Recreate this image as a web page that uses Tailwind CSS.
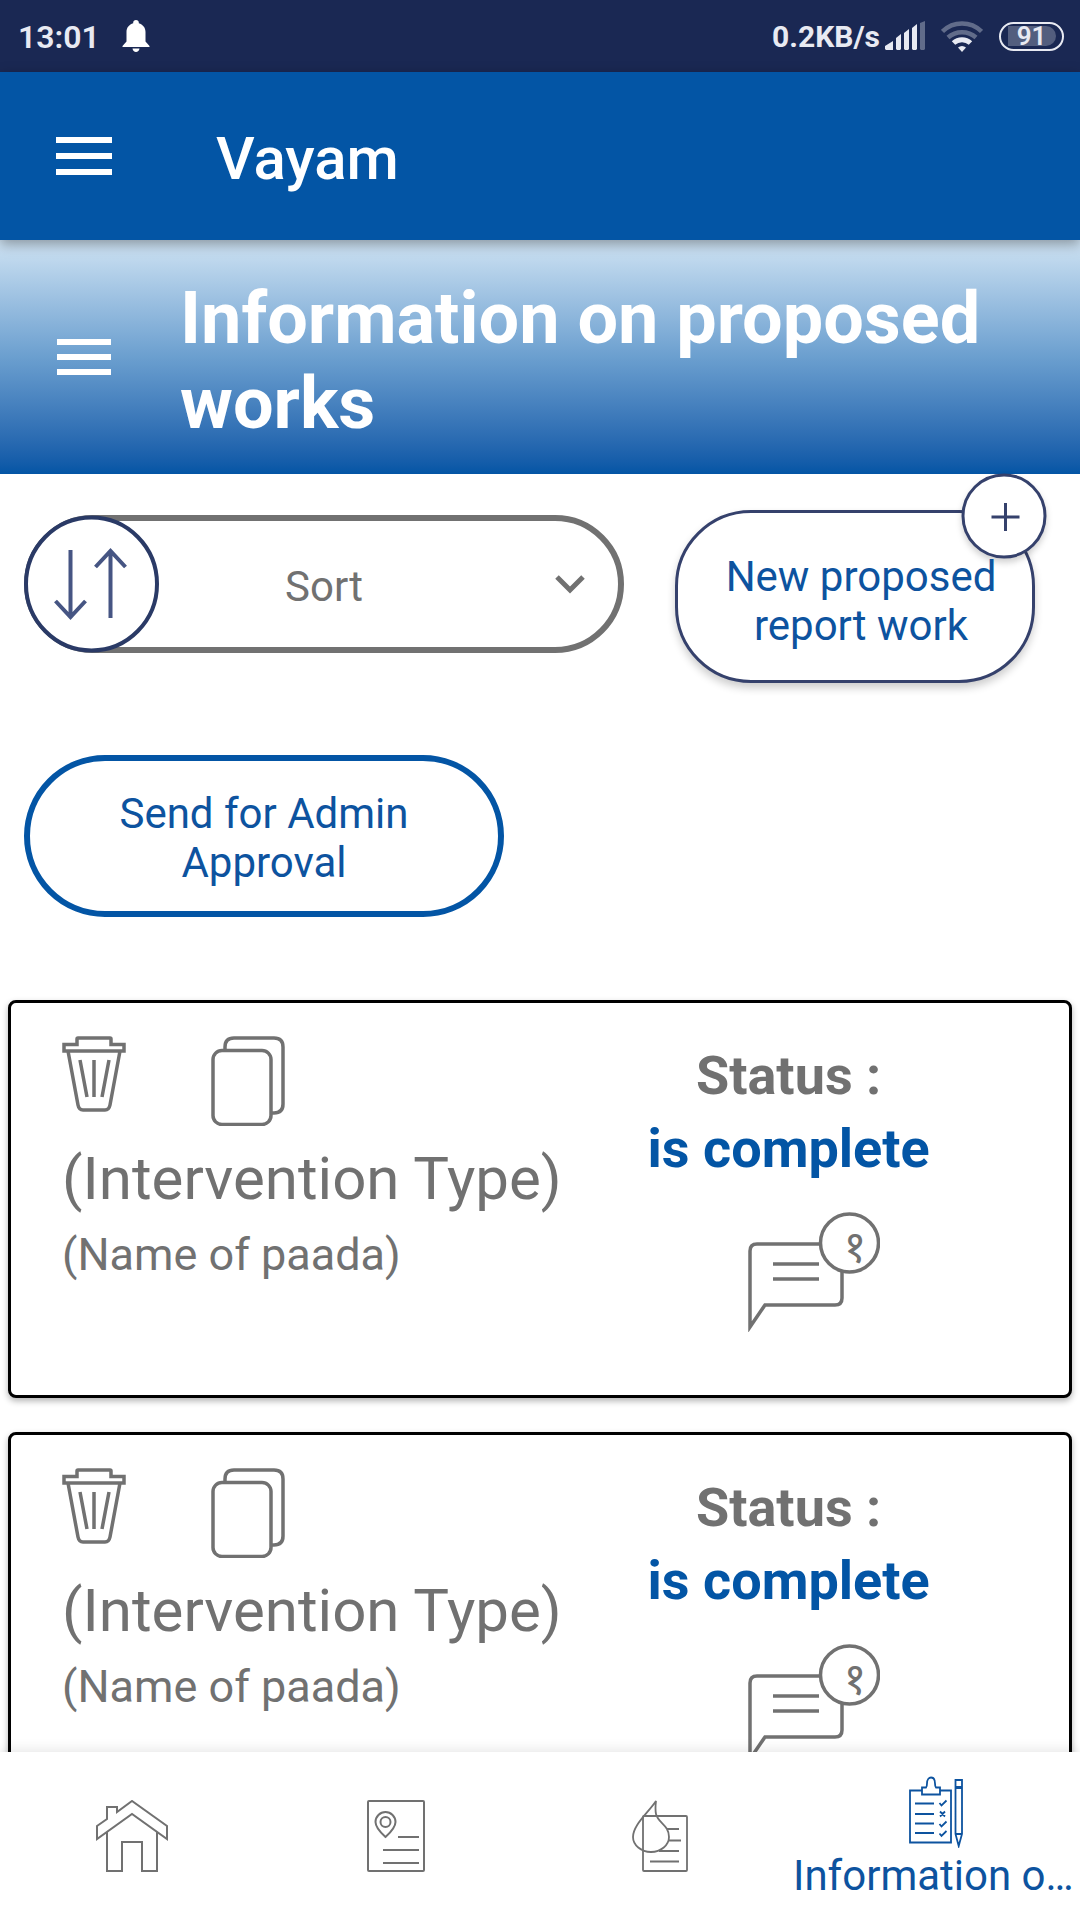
<!DOCTYPE html>
<html lang="en">
<head>
<meta charset="utf-8">
<meta name="viewport" content="width=device-width, initial-scale=1">
<title>Vayam</title>
<script src="https://cdn.jsdelivr.net/npm/@tailwindcss/browser@4"></script>
</head>
<body class="flex h-screen flex-col overflow-hidden bg-white font-['Roboto','Noto_Sans',sans-serif] text-[#717171]">

<!-- Device status bar -->
<div class="flex h-[72px] shrink-0 items-center justify-between bg-[#1a2853] pr-4 pl-[18px] text-[#e8eaf2]">
  <div class="flex items-center gap-[22px]">
    <span class="pt-px text-[32px] leading-9 font-semibold">13:01</span>
    <svg class="h-8 w-7 text-white" viewBox="0 0 28 32" fill="currentColor" aria-label="Notifications"><path d="M14 0c1.700 0 2.800 1.200 2.800 2.600v.6c4 1.200 6.700 4.300 6.700 8.800v9.500L27.500 26v1H.5v-1l4-4.500V12c0-4.500 2.700-7.600 6.700-8.800v-.6C11.200 1.200 12.300 0 14 0zM10.500 28.500h7c-.3 2-1.700 3.500-3.500 3.500s-3.200-1.500-3.500-3.500z"/></svg>
  </div>
  <div class="flex items-center">
    <span class="pt-px text-[30px] leading-9 font-bold">0.2KB/s</span>
    <svg class="ml-[5px] h-8 w-10" viewBox="0 0 40 32" fill="currentColor" aria-label="Signal"><path d="M0 29v-3l8-5v9H1zM11 18l5-4v15l-1 1h-3l-1-1zM19 13l5-4v20l-1 1h-3l-1-1zM27 8l5-4v25l-1 1h-3l-1-1z"/><path opacity=".35" d="M35 3l5-2v28l-1 1h-3l-1-1z"/></svg>
    <svg class="ml-4 h-8 w-[42px]" viewBox="0 0 42 32" fill="none" stroke="currentColor" stroke-width="4.500" aria-label="Wi-Fi"><path opacity=".35" d="M1.500 11.500a28 28 0 0 1 39 0M7 17.500a21 21 0 0 1 28 0"/><path d="M12.500 23a12.500 12.500 0 0 1 17 0" stroke-width="5"/><path fill="currentColor" stroke="none" d="M21 32l-4-4.500a6 6 0 0 1 8 0z"/></svg>
    <div class="ml-4 flex h-[29px] w-[65px] items-center justify-center rounded-full border-2 border-[#e8eaf2]">
      <span class="flex h-5 w-12 items-center justify-center rounded-r-full rounded-l-md bg-white/25 text-[26px] leading-5 font-semibold">91</span>
    </div>
  </div>
</div>

<!-- App bar -->
<header class="relative z-10 flex h-[168px] shrink-0 items-center bg-[#0355a5] pl-14 text-white shadow-[0_4px_12px_rgba(0,0,0,0.35)]">
  <button class="flex w-14 flex-col gap-[10px]" aria-label="Open menu">
    <span class="h-[6px] w-full bg-white"></span><span class="h-[6px] w-full bg-white"></span><span class="h-[6px] w-full bg-white"></span>
  </button>
  <span class="pt-[6px] pl-[104px] text-[60px] leading-[72px] font-medium">Vayam</span>
</header>

<!-- Page banner -->
<section class="flex shrink-0 items-center bg-linear-to-b from-[#cfe3f3] via-[#6b9fcf] to-[#0355a5] pl-[57px] text-white">
  <button class="flex w-[54px] shrink-0 flex-col gap-[9px]" aria-label="Open section menu">
    <span class="h-[6px] w-full bg-white"></span><span class="h-[6px] w-full bg-white"></span><span class="h-[6px] w-full bg-white"></span>
  </button>
  <h1 class="flex-1 pt-9 pr-8 pb-7 pl-[69px] text-[72px] leading-[85px] font-bold">Information on proposed works</h1>
</section>

<main class="min-h-0 flex-1 overflow-visible">
  <div class="grid grid-cols-[5fr_3fr] items-start gap-[51px] pt-9 pr-[45px] pl-6">
    <label class="relative mt-[5px] flex h-[138px] min-w-0 items-center rounded-full border-6 border-[#717171]">
      <svg class="-ml-[6px] h-[138px] w-[136px] shrink-0" viewBox="0 0 136 138" fill="none" stroke="#2a3a66" aria-hidden="true"><ellipse cx="67.500" cy="69" rx="65.500" ry="66.500" fill="#fff" stroke-width="4"/><path stroke="#465583" stroke-width="4" d="M46.500 35v67M31.500 86l15 16 15-16M86.500 103V36M71.500 52l15-16 15 16"/></svg>
      <select aria-label="Sort" class="h-full min-w-0 flex-1 appearance-none rounded-r-full bg-transparent pt-1 pl-[125px] text-[42px] text-[#717171]">
        <option>Sort</option>
      </select>
      <svg class="pointer-events-none absolute right-[33px] h-5 w-[30px]" viewBox="0 0 30 20" fill="none" stroke="currentColor" stroke-width="5" aria-hidden="true"><path d="M2 3l13 13L28 3"/></svg>
    </label>
    <button class="relative min-w-0 rounded-[76px] border-3 border-[#35416c] bg-white pt-[39px] pr-8 pb-[30px] pl-11 text-[42px] leading-[49px] text-[#0d539f] shadow-[0_5px_8px_rgba(0,0,0,0.2)]">
      <svg class="absolute -top-[41px] -right-[16px] h-[88px] w-[88px] overflow-visible drop-shadow-[0_4px_3px_rgba(0,0,0,0.18)]" viewBox="0 0 88 88" fill="none" stroke="#35416c" stroke-width="3" aria-hidden="true"><circle cx="44" cy="44" r="41" fill="#fff"/><path d="M31.500 45h28M45.500 31v28"/></svg>
      <span class="relative">New proposed report work</span>
    </button>
  </div>

  <div class="px-6 pt-[72px] pb-[83px]">
    <button class="w-[480px] max-w-full rounded-full border-6 border-[#0355a5] px-20 pt-7 pb-6 text-[42px] leading-[49px] text-[#0d539f]">Send for Admin Approval</button>
  </div>

  <div class="flex flex-col gap-[34px] px-2">
    <article class="flex min-h-[398px] rounded-lg border-3 border-black bg-white pt-[33px] shadow-[0_3px_6px_rgba(0,0,0,0.3)]">
      <div class="w-[54%] pl-[51px]">
        <div class="flex gap-[85px]">
          <button class="h-[90px] w-16" aria-label="Delete"><svg class="h-[90px] w-16" viewBox="0 0 64 90" fill="none" stroke="currentColor" stroke-width="3.500"><path d="M2 15V8.500h13V3q0-1 1-1h32q1 0 1 1v5.500h13V15zM6 15l10 54q1 5 5 5h22q4 0 5-5l10-54M18 24l7 37M32 24v37M47 24l-7 37"/></svg></button>
          <button class="h-[90px] w-[74px]" aria-label="Duplicate"><svg class="h-[90px] w-[74px]" viewBox="0 0 74 90" fill="none" stroke="currentColor" stroke-width="3.500"><rect x="2" y="14.500" width="58" height="74" rx="9"/><path d="M14 14v-3q0-9 9-9h40q9 0 9 9v57q0 9-9 9h-3"/></svg></button>
        </div>
        <h2 class="pt-[17px] text-[60px] leading-[72px]">(Intervention Type)</h2>
        <p class="pt-[14px] text-[45px] leading-[52px]">(Name of paada)</p>
      </div>
      <div class="flex w-[39%] flex-col items-center pt-[3px] text-[54px] leading-[73px] font-bold">
        <p>Status :</p>
        <p class="text-[#0355a5]">is complete</p>
        <button class="mt-[27px] ml-[50px] h-[120px] w-[132px]" aria-label="Comments"><svg class="h-[120px] w-[132px]" viewBox="0 0 132 120" fill="none" stroke="currentColor" stroke-width="3.500"><path d="M71 32H9q-7 0-7 7v76l15-22h70q7 0 7-7V60M25 52h46M25 67h46"/><circle cx="101.500" cy="31" r="29"/><text x="107" y="50" text-anchor="middle" font-size="44" font-weight="400" fill="currentColor" stroke="none">१</text></svg></button>
      </div>
    </article>

    <article class="flex min-h-[398px] rounded-lg border-3 border-black bg-white pt-[33px] shadow-[0_3px_6px_rgba(0,0,0,0.3)]">
      <div class="w-[54%] pl-[51px]">
        <div class="flex gap-[85px]">
          <button class="h-[90px] w-16" aria-label="Delete"><svg class="h-[90px] w-16" viewBox="0 0 64 90" fill="none" stroke="currentColor" stroke-width="3.500"><path d="M2 15V8.500h13V3q0-1 1-1h32q1 0 1 1v5.500h13V15zM6 15l10 54q1 5 5 5h22q4 0 5-5l10-54M18 24l7 37M32 24v37M47 24l-7 37"/></svg></button>
          <button class="h-[90px] w-[74px]" aria-label="Duplicate"><svg class="h-[90px] w-[74px]" viewBox="0 0 74 90" fill="none" stroke="currentColor" stroke-width="3.500"><rect x="2" y="14.500" width="58" height="74" rx="9"/><path d="M14 14v-3q0-9 9-9h40q9 0 9 9v57q0 9-9 9h-3"/></svg></button>
        </div>
        <h2 class="pt-[17px] text-[60px] leading-[72px]">(Intervention Type)</h2>
        <p class="pt-[14px] text-[45px] leading-[52px]">(Name of paada)</p>
      </div>
      <div class="flex w-[39%] flex-col items-center pt-[3px] text-[54px] leading-[73px] font-bold">
        <p>Status :</p>
        <p class="text-[#0355a5]">is complete</p>
        <button class="mt-[27px] ml-[50px] h-[120px] w-[132px]" aria-label="Comments"><svg class="h-[120px] w-[132px]" viewBox="0 0 132 120" fill="none" stroke="currentColor" stroke-width="3.500"><path d="M71 32H9q-7 0-7 7v76l15-22h70q7 0 7-7V60M25 52h46M25 67h46"/><circle cx="101.500" cy="31" r="29"/><text x="107" y="50" text-anchor="middle" font-size="44" font-weight="400" fill="currentColor" stroke="none">१</text></svg></button>
      </div>
    </article>
  </div>
</main>

<!-- Bottom tabs -->
<nav class="relative z-10 flex h-[168px] shrink-0 bg-white shadow-[0_-2px_12px_rgba(0,0,0,0.1)]">
  <a href="#" class="flex min-w-0 flex-11 items-center justify-center" aria-label="Home">
    <svg class="size-[72px]" viewBox="0 0 72 72" fill="none" stroke="currentColor" stroke-width="2"><path d="M1 26l10-7V7h10v5l15-11 35 25v13L36 14 1 39zM11 32v39h15V42h20v29h15V32"/></svg>
  </a>
  <a href="#" class="flex min-w-0 flex-11 items-center justify-center" aria-label="Locations">
    <svg class="h-[72px] w-[58px]" viewBox="0 0 58 72" fill="none" stroke="currentColor" stroke-width="2"><rect x="1" y="1" width="56" height="70" rx="1"/><path d="M18.500 37Q8.500 28 8.500 22a10 10 0 0 1 20 0q0 6-10 15zM31 37h21M16 50h36M16 63h36"/><circle cx="18.500" cy="22" r="5"/></svg>
  </a>
  <a href="#" class="flex min-w-0 flex-11 items-center justify-center" aria-label="Water report">
    <svg class="h-[72px] w-14" viewBox="0 0 56 72" fill="none" stroke="currentColor" stroke-width="1.800"><rect x="11" y="16" width="44" height="55" rx="1"/><path d="M24 1C16 13 1 25 1 37c0 8 8 15 18 15s18-7 18-15c0-12-11-14-13-23q-1-5 0-13zM35 29h12M36 40.500h13M27 51h20M18 61.500h29"/></svg>
  </a>
  <a href="#" class="flex min-w-0 flex-12 flex-col items-center gap-[3px] pt-6 text-[#0d539f]">
    <svg class="h-[72px] w-[54px] shrink-0" viewBox="0 0 54 72" fill="none" stroke="currentColor" stroke-width="1.800" aria-hidden="true"><path d="M13 14.500H1v52h41v-52H31M13 18.500v-7h4q1-1 1-4c0-8 8-8 8 0q0 3 1 4h4v7zM6 27.500h19M6 38h19M6 47.500h19M6 57h19M30.500 27l2 2.500 5-5M31 35.500l5 5M36 35.500l-5 5M30.500 48l2 2.500 5-5M30.500 57.500l2 2.500 5-5M46.500 4h6.500v54l-3.300 12-3.200-12zM46.500 58h6.500"/><path stroke-width="3" d="M46.500 11.500h6.500"/></svg>
    <span class="w-full truncate pl-px text-[42px] leading-[49px]" title="Information on proposed works">Information o…</span>
  </a>
</nav>
</body>
</html>
